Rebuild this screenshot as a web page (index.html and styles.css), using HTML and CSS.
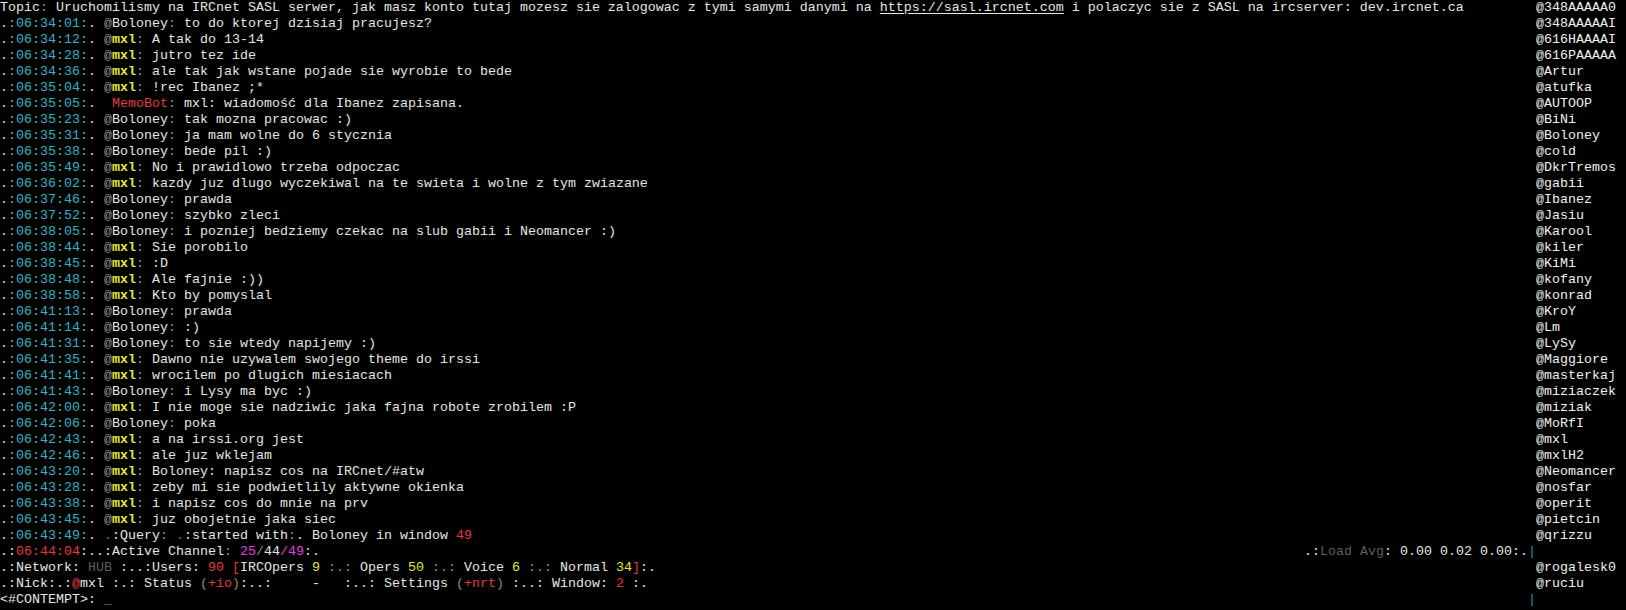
FILE: index.html
```html
<!DOCTYPE html>
<html lang="pl">
<head>
    <meta charset="UTF-8">
    <meta name="viewport" content="width=device-width, initial-scale=1.0">
    <title>irssi - #CONTEMPT</title>
    <link rel="stylesheet" href="styles.css">
</head>
<body>
    <div class="term">
        <div class="row"><span class="main">Topic<span class="g">:</span> Uruchomilismy na IRCnet SASL serwer, jak masz konto tutaj mozesz sie zalogowac z tymi samymi danymi na <span class="u">https://sasl.ircnet.com</span> i polaczyc sie z SASL na ircserver: dev.ircnet.ca</span><span class="nick">@348AAAAA0</span></div>
        <div class="row"><span class="main">.<span class="c">:06:34:01:</span>. <span class="g">@</span>Boloney<span class="g">:</span> to do ktorej dzisiaj pracujesz?</span><span class="nick">@348AAAAAI</span></div>
        <div class="row"><span class="main">.<span class="c">:06:34:12:</span>. <span class="g">@</span><span class="y">mxl</span><span class="g">:</span> A tak do 13-14</span><span class="nick">@616HAAAAI</span></div>
        <div class="row"><span class="main">.<span class="c">:06:34:28:</span>. <span class="g">@</span><span class="y">mxl</span><span class="g">:</span> jutro tez ide</span><span class="nick">@616PAAAAA</span></div>
        <div class="row"><span class="main">.<span class="c">:06:34:36:</span>. <span class="g">@</span><span class="y">mxl</span><span class="g">:</span> ale tak jak wstane pojade sie wyrobie to bede</span><span class="nick">@Artur</span></div>
        <div class="row"><span class="main">.<span class="c">:06:35:04:</span>. <span class="g">@</span><span class="y">mxl</span><span class="g">:</span> !rec Ibanez ;*</span><span class="nick">@atufka</span></div>
        <div class="row"><span class="main">.<span class="c">:06:35:05:</span>.  <span class="r">MemoBot</span><span class="g">:</span> mxl: wiadomość dla Ibanez zapisana.</span><span class="nick">@AUTOOP</span></div>
        <div class="row"><span class="main">.<span class="c">:06:35:23:</span>. <span class="g">@</span>Boloney<span class="g">:</span> tak mozna pracowac :)</span><span class="nick">@BiNi</span></div>
        <div class="row"><span class="main">.<span class="c">:06:35:31:</span>. <span class="g">@</span>Boloney<span class="g">:</span> ja mam wolne do 6 stycznia</span><span class="nick">@Boloney</span></div>
        <div class="row"><span class="main">.<span class="c">:06:35:38:</span>. <span class="g">@</span>Boloney<span class="g">:</span> bede pil :)</span><span class="nick">@cold</span></div>
        <div class="row"><span class="main">.<span class="c">:06:35:49:</span>. <span class="g">@</span><span class="y">mxl</span><span class="g">:</span> No i prawidlowo trzeba odpoczac</span><span class="nick">@DkrTremos</span></div>
        <div class="row"><span class="main">.<span class="c">:06:36:02:</span>. <span class="g">@</span><span class="y">mxl</span><span class="g">:</span> kazdy juz dlugo wyczekiwal na te swieta i wolne z tym zwiazane</span><span class="nick">@gabii</span></div>
        <div class="row"><span class="main">.<span class="c">:06:37:46:</span>. <span class="g">@</span>Boloney<span class="g">:</span> prawda</span><span class="nick">@Ibanez</span></div>
        <div class="row"><span class="main">.<span class="c">:06:37:52:</span>. <span class="g">@</span>Boloney<span class="g">:</span> szybko zleci</span><span class="nick">@Jasiu</span></div>
        <div class="row"><span class="main">.<span class="c">:06:38:05:</span>. <span class="g">@</span>Boloney<span class="g">:</span> i pozniej bedziemy czekac na slub gabii i Neomancer :)</span><span class="nick">@Karool</span></div>
        <div class="row"><span class="main">.<span class="c">:06:38:44:</span>. <span class="g">@</span><span class="y">mxl</span><span class="g">:</span> Sie porobilo</span><span class="nick">@kiler</span></div>
        <div class="row"><span class="main">.<span class="c">:06:38:45:</span>. <span class="g">@</span><span class="y">mxl</span><span class="g">:</span> :D</span><span class="nick">@KiMi</span></div>
        <div class="row"><span class="main">.<span class="c">:06:38:48:</span>. <span class="g">@</span><span class="y">mxl</span><span class="g">:</span> Ale fajnie :))</span><span class="nick">@kofany</span></div>
        <div class="row"><span class="main">.<span class="c">:06:38:58:</span>. <span class="g">@</span><span class="y">mxl</span><span class="g">:</span> Kto by pomyslal</span><span class="nick">@konrad</span></div>
        <div class="row"><span class="main">.<span class="c">:06:41:13:</span>. <span class="g">@</span>Boloney<span class="g">:</span> prawda</span><span class="nick">@KroY</span></div>
        <div class="row"><span class="main">.<span class="c">:06:41:14:</span>. <span class="g">@</span>Boloney<span class="g">:</span> :)</span><span class="nick">@Lm</span></div>
        <div class="row"><span class="main">.<span class="c">:06:41:31:</span>. <span class="g">@</span>Boloney<span class="g">:</span> to sie wtedy napijemy :)</span><span class="nick">@LySy</span></div>
        <div class="row"><span class="main">.<span class="c">:06:41:35:</span>. <span class="g">@</span><span class="y">mxl</span><span class="g">:</span> Dawno nie uzywalem swojego theme do irssi</span><span class="nick">@Maggiore</span></div>
        <div class="row"><span class="main">.<span class="c">:06:41:41:</span>. <span class="g">@</span><span class="y">mxl</span><span class="g">:</span> wrocilem po dlugich miesiacach</span><span class="nick">@masterkaj</span></div>
        <div class="row"><span class="main">.<span class="c">:06:41:43:</span>. <span class="g">@</span>Boloney<span class="g">:</span> i Lysy ma byc :)</span><span class="nick">@miziaczek</span></div>
        <div class="row"><span class="main">.<span class="c">:06:42:00:</span>. <span class="g">@</span><span class="y">mxl</span><span class="g">:</span> I nie moge sie nadziwic jaka fajna robote zrobilem :P</span><span class="nick">@miziak</span></div>
        <div class="row"><span class="main">.<span class="c">:06:42:06:</span>. <span class="g">@</span>Boloney<span class="g">:</span> poka</span><span class="nick">@MoRfI</span></div>
        <div class="row"><span class="main">.<span class="c">:06:42:43:</span>. <span class="g">@</span><span class="y">mxl</span><span class="g">:</span> a na irssi.org jest</span><span class="nick">@mxl</span></div>
        <div class="row"><span class="main">.<span class="c">:06:42:46:</span>. <span class="g">@</span><span class="y">mxl</span><span class="g">:</span> ale juz wklejam</span><span class="nick">@mxlH2</span></div>
        <div class="row"><span class="main">.<span class="c">:06:43:20:</span>. <span class="g">@</span><span class="y">mxl</span><span class="g">:</span> Boloney: napisz cos na IRCnet/#atw</span><span class="nick">@Neomancer</span></div>
        <div class="row"><span class="main">.<span class="c">:06:43:28:</span>. <span class="g">@</span><span class="y">mxl</span><span class="g">:</span> zeby mi sie podwietlily aktywne okienka</span><span class="nick">@nosfar</span></div>
        <div class="row"><span class="main">.<span class="c">:06:43:38:</span>. <span class="g">@</span><span class="y">mxl</span><span class="g">:</span> i napisz cos do mnie na prv</span><span class="nick">@operit</span></div>
        <div class="row"><span class="main">.<span class="c">:06:43:45:</span>. <span class="g">@</span><span class="y">mxl</span><span class="g">:</span> juz obojetnie jaka siec</span><span class="nick">@pietcin</span></div>
        <div class="row"><span class="main">.<span class="c">:06:43:49:</span>. <span class="r">.</span>:Query<span class="g">:</span> <span class="r">.</span>:started with<span class="g">:</span>. Boloney in window <span class="r">49</span></span><span class="nick">@qrizzu</span></div>
        <div class="row status"><span class="main"><span>.:<span class="r">06:44:04</span>:..:Active Channel<span class="g">:</span> <span class="m">25</span><span class="g">/</span>44<span class="m">/49</span>:.</span><span>.:<span class="dg">Load Avg</span>: 0.00 0.02 0.00:.<span class="bar">|</span></span></span><span class="nick"></span></div>
        <div class="row"><span class="main">.:Network: <span class="dg">HUB</span> :..:Users: <span class="r">90</span> <span class="r">[</span>IRCOpers <span class="y2">9</span> <span class="g">:.:</span> Opers <span class="y2">50</span> <span class="g">:.:</span> Voice <span class="y2">6</span> <span class="g">:.:</span> Normal <span class="y2">34</span><span class="r">]</span>:.</span><span class="nick">@rogalesk0</span></div>
        <div class="row"><span class="main">.:Nick:.:<span class="r">@</span>mxl :.: Status <span class="g">(</span><span class="r">+io</span><span class="g">)</span>:..:     -   :..: Settings <span class="g">(</span><span class="r">+nrt</span><span class="g">)</span> :..: Window: <span class="r">2</span> :.</span><span class="nick">@ruciu</span></div>
        <div class="row status"><span class="main"><span>&lt;#CONTEMPT&gt;: <span class="cur">_</span></span><span class="bar">|</span></span><span class="nick"></span></div>
    </div>
</body>
</html>
```

FILE: styles.css
```css
*{
    box-sizing: border-box;
}
html, body{
    background-color: #000;
}
body{
    margin: 0;
    height: 610px;
    overflow: hidden;
    color: #e6e6e6;
    font-family: "Liberation Mono", "DejaVu Sans Mono", monospace;
    font-size: 13.333px;
}
.term{
    display: flex;
    flex-direction: column;
}
.row{
    display: grid;
    grid-template-columns: 1536px 1fr;
    height: 16px;
    line-height: 16px;
    white-space: pre;
}
.main{
    overflow: hidden;
}
.status .main{
    display: flex;
    justify-content: space-between;
}
.nick{
    color: #f0f0f0;
}
.c{
    color: #30b4c6;
}
.g{
    color: #8a8a8a;
}
.dg{
    color: #5e5e5e;
}
.y{
    color: #e8e832;
    font-weight: bold;
}
.y2{
    color: #e8e832;
}
.r{
    color: #e23c3c;
}
.m{
    color: #e040e0;
}
.u{
    text-decoration: underline;
    text-underline-offset: 2px;
}
.bar{
    color: #3c8ac8;
}
.cur{
    color: #20c040;
}
```
